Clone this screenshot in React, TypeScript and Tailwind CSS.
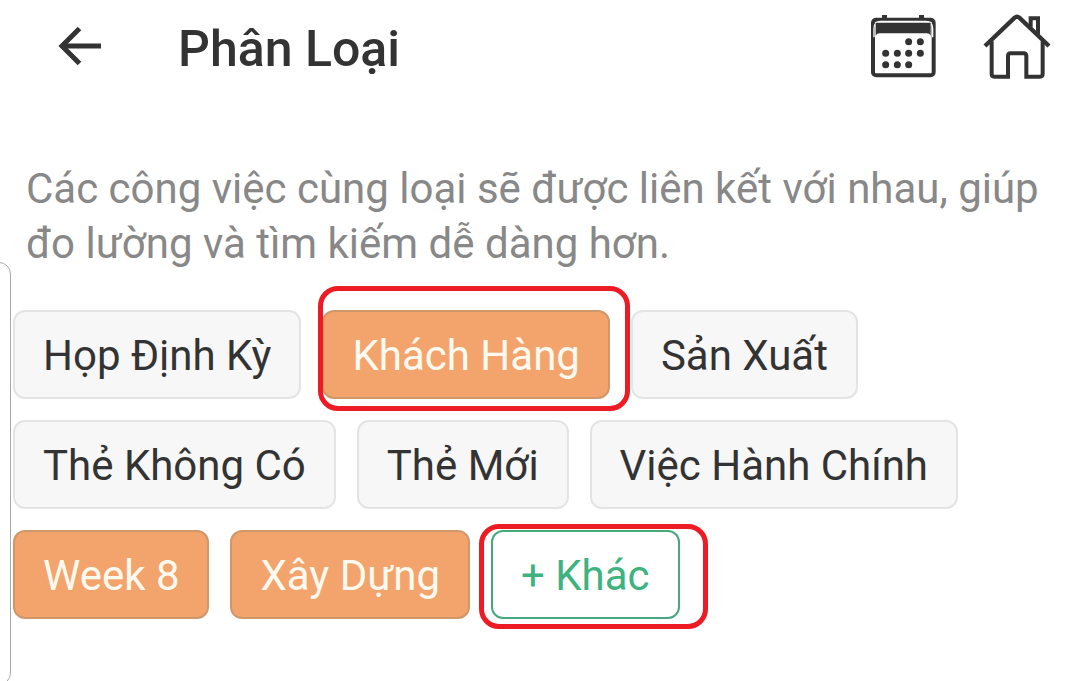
import { useState } from "react";
import clsx from "clsx";

type Tag = {
    name: string;
    selected: boolean;
    marked?: boolean;
};

const TAGS: Tag[] = [
    { name: "Họp Định Kỳ", selected: false },
    { name: "Khách Hàng", selected: true, marked: true },
    { name: "Sản Xuất", selected: false },
    { name: "Thẻ Không Có", selected: false },
    { name: "Thẻ Mới", selected: false },
    { name: "Việc Hành Chính", selected: false },
    { name: "Week 8", selected: true },
    { name: "Xây Dựng", selected: true },
];

const BackIcon = () => (
    <svg width="44" height="40" viewBox="0 0 44 40" fill="none" stroke="currentColor" strokeWidth="5">
        <path d="M21.500 2.500 4 20 21.500 37.500" />
        <path d="M5 20H43" />
    </svg>
);

const CalendarIcon = () => (
    <svg width="67" height="65" viewBox="90 42 201 195">
        <rect x="99" y="59" width="182" height="167" rx="9" fill="none" stroke="currentColor" strokeWidth="12" />
        <path d="M102 112V86Q102 64 122 64H258Q278 64 278 86V112" fill="none" stroke="#fff" strokeWidth="4" />
        <path d="M107 68H272V107Q269 100 260 100H119Q110 100 107 107Z" fill="currentColor" />
        <path d="M126 45H141V58H126ZM237 45H252V58H237Z" fill="currentColor" />
        <g fill="currentColor">
            <circle cx="206" cy="125" r="10.500" />
            <circle cx="241" cy="125" r="10.500" />
            <circle cx="137" cy="160" r="10.500" />
            <circle cx="172" cy="160" r="10.500" />
            <circle cx="206" cy="160" r="10.500" />
            <circle cx="241" cy="160" r="10.500" />
            <circle cx="137" cy="194" r="10.500" />
            <circle cx="172" cy="194" r="10.500" />
            <circle cx="206" cy="194" r="10.500" />
        </g>
    </svg>
);

const HomeIcon = () => (
    <svg width="68" height="65" viewBox="429 38 204 195" fill="none" stroke="currentColor" strokeWidth="12">
        <path d="M435 134 524 49Q531 43 538 49L627 134" strokeWidth="13" />
        <path d="M455 120V218Q455 226 463 226H504V164Q504 156 512 156H551Q559 156 559 164V226H600Q608 226 608 218V120" />
        <path d="M572 78V51H594V98" />
    </svg>
);

const App = () => {
    const [tags, setTags] = useState<Tag[]>(TAGS);

    const toggleTag = (name: string) => {
        setTags(tags.map((tag) => (tag.name === name ? { ...tag, selected: !tag.selected } : tag)));
    };

    return (
        <div className="relative min-h-screen overflow-hidden bg-white font-[Roboto,sans-serif] text-[#333333]">
            {/* edge of the side drawer */}
            <div className="absolute top-[262px] -left-4 -bottom-1 w-[27px] rounded-xl border border-[#a8a8a8]" />

            <header className="flex h-[92px] items-center pl-[58px] pr-[29px]">
                <button aria-label="Quay lại" className="cursor-pointer">
                    <BackIcon />
                </button>
                <h1 className="ml-[76px] flex-1 pt-1.5 text-[50px] leading-[60px] font-medium">Phân Loại</h1>
                <div className="flex gap-[46px]">
                    <button aria-label="Lịch" className="cursor-pointer">
                        <CalendarIcon />
                    </button>
                    <button aria-label="Trang chủ" className="cursor-pointer">
                        <HomeIcon />
                    </button>
                </div>
            </header>

            <main className="pt-[69px]">
                <p className="pl-[26px] pr-5 text-[42px] leading-[55px] text-[#888888]">
                    Các công việc cùng loại sẽ được liên kết với nhau, giúp đo lường và tìm kiếm dễ dàng hơn.
                </p>
                <div className="mt-[39px] flex flex-wrap gap-[21px] px-[13px]">
                    {tags.map((tag) => (
                        <div key={tag.name} className="relative">
                            <button
                                aria-pressed={tag.selected}
                                onClick={() => toggleTag(tag.name)}
                                className={clsx(
                                    "h-[89px] cursor-pointer rounded-xl border-2 px-7 pt-0.5 text-[42px]",
                                    tag.selected
                                        ? "border-[#d0976b] bg-[#f3a46d] text-[#fffaf0]"
                                        : "border-[#e4e4e4] bg-[#f7f7f7]"
                                )}
                            >
                                {tag.name}
                            </button>
                            {tag.marked && (
                                <span className="pointer-events-none absolute -top-6 -right-5 -bottom-3 -left-1 rounded-[20px] border-5 border-[#ed1c24]" />
                            )}
                        </div>
                    ))}
                    <div className="relative">
                        <button className="h-[89px] cursor-pointer rounded-xl border-2 border-[#48a880] px-7 pt-0.5 text-[42px] text-[#3eb27f]">
                            + Khác
                        </button>
                        <span className="pointer-events-none absolute -top-1.5 -right-7 -bottom-2.5 -left-3 rounded-[20px] border-5 border-[#ed1c24]" />
                    </div>
                </div>
            </main>
        </div>
    );
};

export default App;
